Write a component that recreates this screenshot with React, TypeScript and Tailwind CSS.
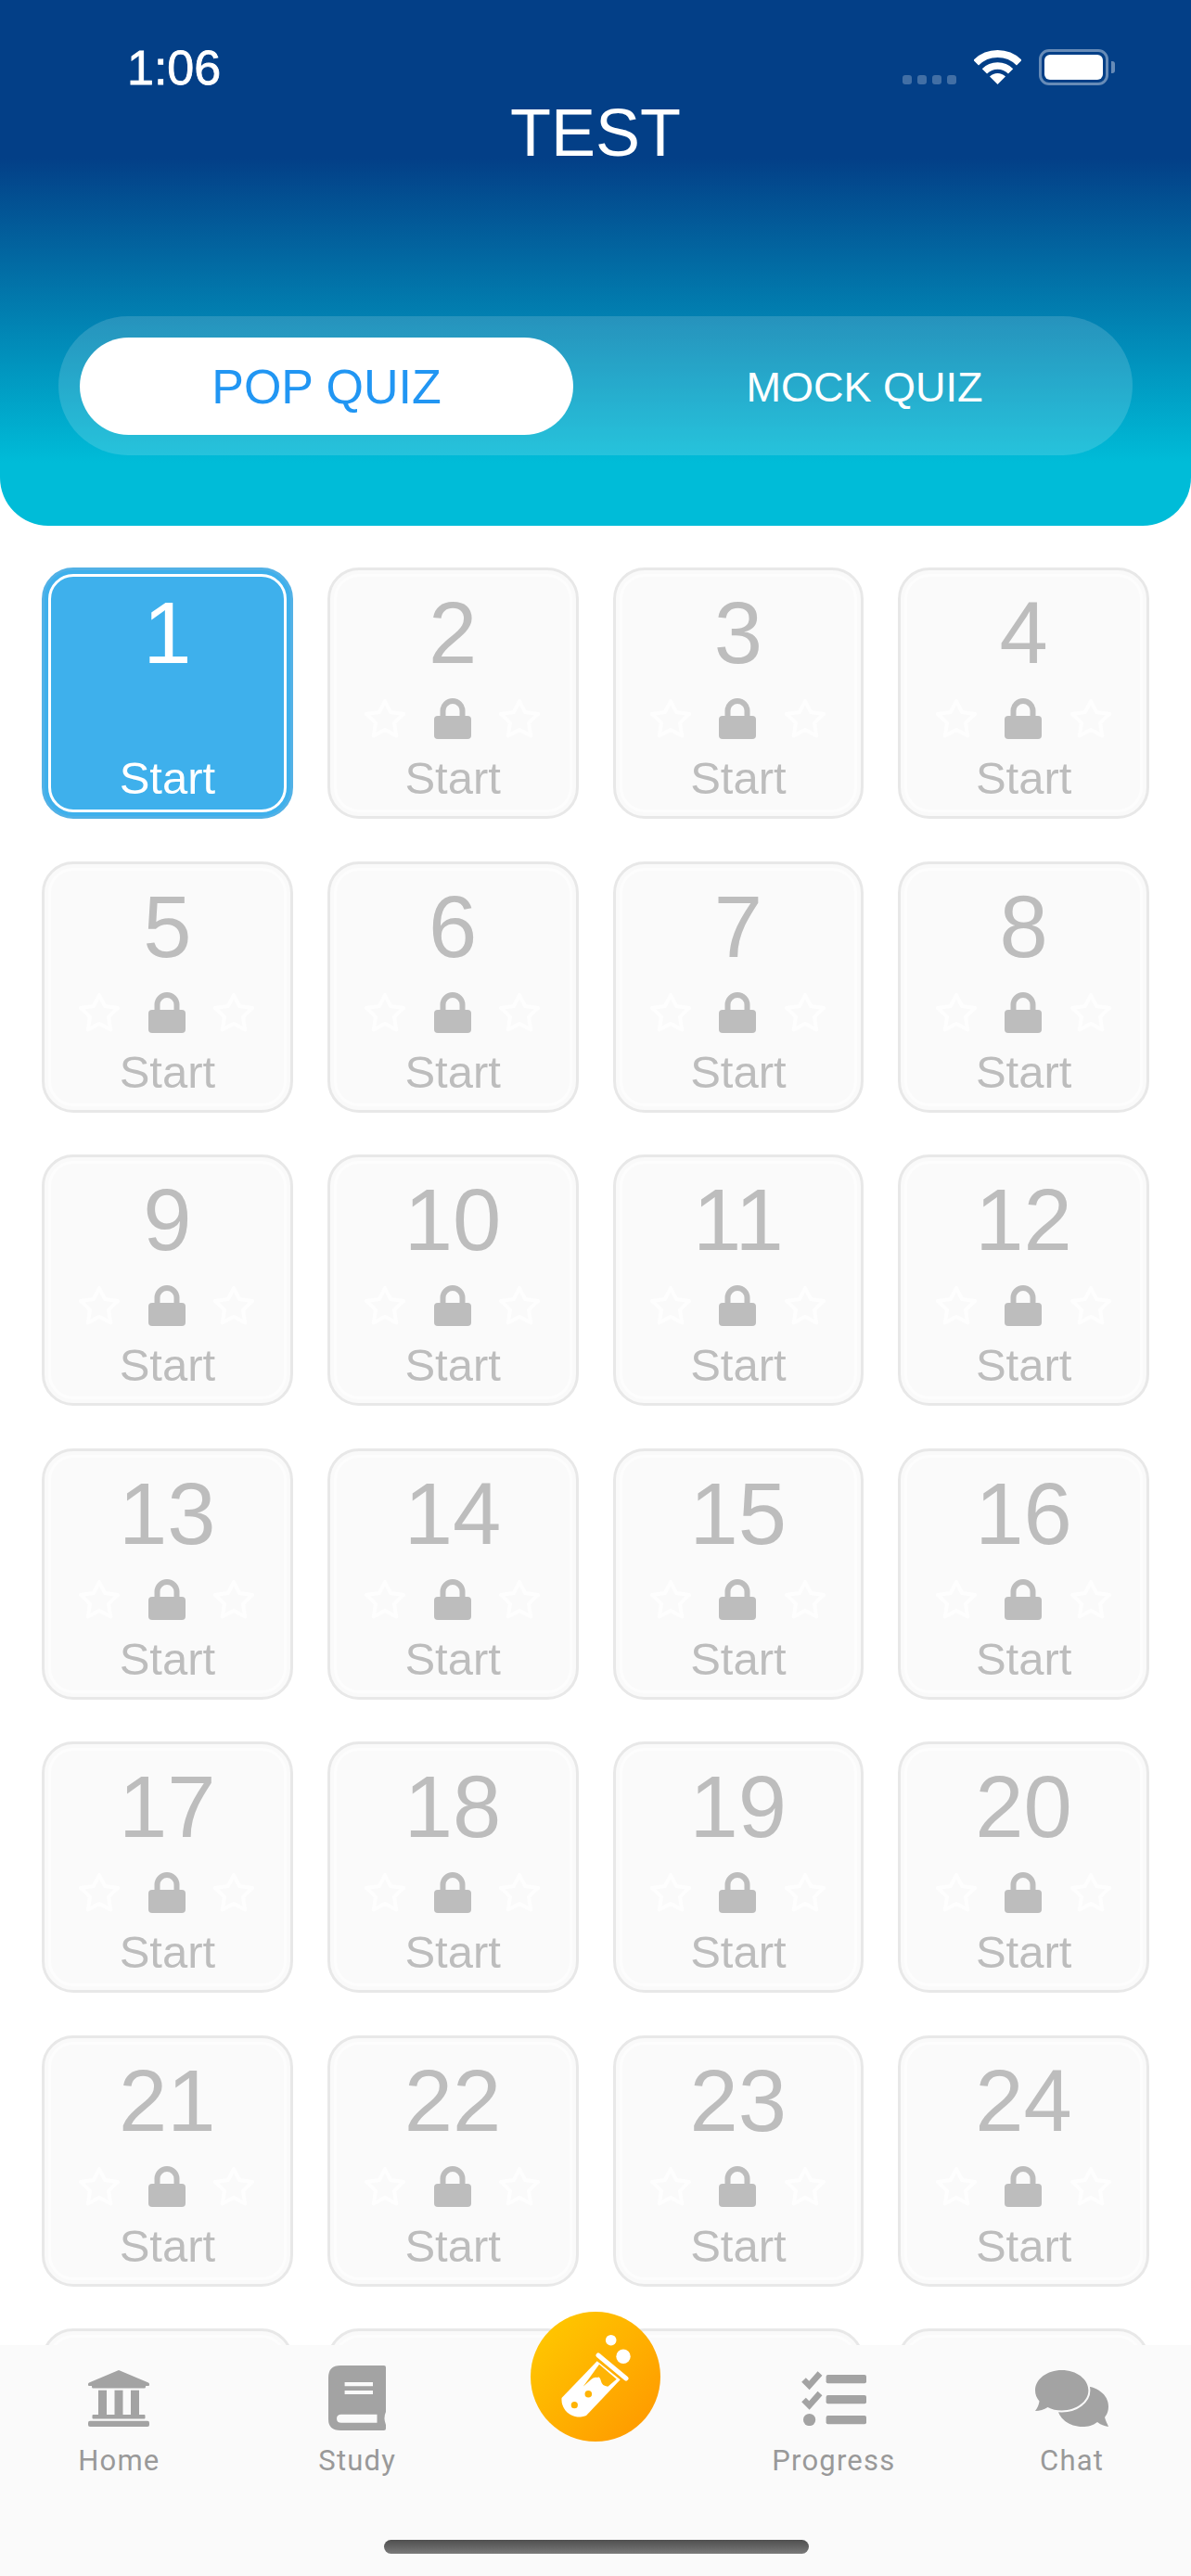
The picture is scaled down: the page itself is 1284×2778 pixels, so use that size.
import React from "react"

const levels = Array.from({ length: 24 }, (_, i) => i + 1)

function Star() {
  return (
    <svg width="46" height="44" viewBox="0 0 46 44">
      <polygon
        points="23,3 29.2,15 43,17 33,26.6 35.3,40.5 23,34 10.7,40.5 13,26.6 3,17 16.8,15"
        fill="none"
        stroke="#fefefe"
        strokeWidth="4"
        strokeLinejoin="round"
      />
    </svg>
  )
}

function Lock() {
  return (
    <svg width="40" height="44" viewBox="0 0 40 44">
      <path d="M9.5 20 V13.5 a10.5 10.5 0 0 1 21 0 V20" fill="none" stroke="#bdbdbd" strokeWidth="6" />
      <rect x="0" y="19" width="40" height="25" rx="4" fill="#bdbdbd" />
    </svg>
  )
}

function LevelCard({ n }: { n?: number }) {
  const active = n === 1
  return (
    <div className={`h-[271px] rounded-[34px] border-[3px] p-[4px] ${active ? "border-[#52b1e6] bg-[#3eb0ec]" : "border-[#e8e8e8] bg-[#fafafa]"}`}>
      <div className={`flex h-full flex-col items-center rounded-[27px] border-[3px] ${active ? "border-white text-white" : "border-[#fdfdfd] text-[#bdbdbd]"}`}>
        {n && (
          <>
            <div className="mt-[13px] text-[94px] leading-[96px]">{n}</div>
            <div className="mt-[22px] flex h-[44px] w-[192px] items-center justify-between pr-[1px]">
              {!active && (
                <>
                  <Star />
                  <Lock />
                  <Star />
                </>
              )}
            </div>
            <div className="mt-[18px] text-[49px] leading-[48px]">Start</div>
          </>
        )}
      </div>
    </div>
  )
}

function StatusBar() {
  return (
    <div className="flex items-start justify-between pl-[137px] pr-[82px] pt-[53px]">
      <div className="text-[52px] leading-[40px] text-white [-webkit-text-stroke:0.8px_white]">1:06</div>
      <div className="flex items-end">
        <div className="mb-[1px] flex gap-[6px]">
          <div className="h-[10px] w-[10px] rounded-[3px] bg-white/25" />
          <div className="h-[10px] w-[10px] rounded-[3px] bg-white/25" />
          <div className="h-[10px] w-[10px] rounded-[3px] bg-white/25" />
          <div className="h-[10px] w-[10px] rounded-[3px] bg-white/25" />
        </div>
        <svg className="ml-[19px] mb-[1px]" width="51" height="37" viewBox="0 0 51 37" fill="none">
          <path d="M2.2 13.7 A33 33 0 0 1 48.8 13.7" stroke="white" strokeWidth="8" />
          <path d="M11.4 22.9 A20 20 0 0 1 39.6 22.9" stroke="white" strokeWidth="7.5" />
          <path d="M25.5 37 L17 28.5 A12 12 0 0 1 34 28.5 Z" fill="white" />
        </svg>
        <div className="ml-[19px] flex items-center">
          <div className="h-[39px] w-[75px] rounded-[11px] border-[3px] border-white/40 p-[3px]">
            <div className="h-full w-full rounded-[6px] bg-white" />
          </div>
          <div className="ml-[3px] h-[13px] w-[4px] rounded-r-[3px] bg-white/40" />
        </div>
      </div>
    </div>
  )
}

function HomeIcon() {
  return (
    <svg width="66" height="61" viewBox="0 0 66 61" fill="#a3a3a3">
      <path d="M33 0 L65 13.5 Q66 14 66 15 V16 Q66 17 65 17 H62 V18 Q62 19.5 60.5 19.5 H5.5 Q4 19.5 4 18 V17 H1 Q0 17 0 16 V15 Q0 14 1 13.5 Z" />
      <rect x="11" y="21.7" width="9" height="26.5" />
      <rect x="28.5" y="21.7" width="9" height="26.5" />
      <rect x="46" y="21.7" width="9" height="26.5" />
      <rect x="4.5" y="48" width="57" height="4.5" rx="1" />
      <rect x="0" y="54.7" width="66" height="6.3" rx="2" />
    </svg>
  )
}

function BookIcon() {
  return (
    <svg width="62" height="70" viewBox="0 0 62 70" fill="#a3a3a3">
      <path
        fillRule="evenodd"
        d="M13 0 H60 Q62 0 62 2 V50 Q59 56 62 64 V68 Q62 70 60 70 H13 Q0 70 0 58 V13 Q0 0 13 0 Z M17.6 18 V22.3 H48 V18 Z M17.6 27 V31 H48 V27 Z M14 52.7 Q9 52.7 9 57.2 Q9 61.7 14 61.7 H52.5 V52.7 Z"
      />
    </svg>
  )
}

function ProgressIcon() {
  return (
    <svg width="70" height="59" viewBox="0 0 70 59" fill="#a3a3a3">
      <path d="M2.5 9.5 L8.5 15.5 L20 2.5" fill="none" stroke="#a3a3a3" strokeWidth="6.5" />
      <path d="M2.5 31 L8.5 37 L20 24" fill="none" stroke="#a3a3a3" strokeWidth="6.5" />
      <circle cx="8.6" cy="52.5" r="6.6" />
      <rect x="26.6" y="4" width="43.4" height="9.3" rx="2" />
      <rect x="26.6" y="26" width="43.4" height="9.3" rx="2" />
      <rect x="26.6" y="48" width="43.4" height="9.3" rx="2" />
    </svg>
  )
}

function ChatIcon() {
  return (
    <svg width="79" height="61" viewBox="0 0 79 61" fill="#a3a3a3">
      <path d="M51 17 C66 17 79 26 79 39 C79 45 77 48 75 51 C76 55 78 58 79 61 C74 60 71 59 67 56 C62 60 57 61 51 61 C37 61 24 52 24 39 C24 26 37 17 51 17 Z" />
      <path
        d="M28.7 0 C44.5 0 57.4 9.7 57.4 21.7 C57.4 33.7 44.5 43.4 28.7 43.4 C23 43.4 18 42.5 13.5 40 C9.5 42.5 5 44 0 44 C2.5 41 4 37 4.5 33.5 C1.5 30 0 26 0 21.7 C0 9.7 12.9 0 28.7 0 Z"
        stroke="#fafafa"
        strokeWidth="4"
        paintOrder="stroke"
      />
    </svg>
  )
}

function FlaskIcon() {
  return (
    <svg className="h-full w-full" viewBox="0 0 140 140">
      <path d="M71.7 53.3 L33.5 93 A19 19 0 0 0 60 112 L96.7 73.3 Z" fill="white" />
      <path d="M74 56.7 L92.7 72.7 L83.3 80.7 Q77 80 76 75 Q74.5 69 72 71 Q68 70 65 73.3 L56.7 80.7 Z" fill="#ffb405" />
      <path d="M73 47 L103 72" stroke="white" strokeWidth="5" strokeLinecap="round" />
      <circle cx="47.3" cy="100.7" r="3.6" fill="#ffb405" />
      <circle cx="62.3" cy="88.7" r="3.8" fill="#ffb405" />
      <circle cx="86.7" cy="30.7" r="5.8" fill="white" />
      <circle cx="100" cy="48.3" r="7.7" fill="white" />
    </svg>
  )
}

const tabs = [
  { label: "Home", icon: <HomeIcon /> },
  { label: "Study", icon: <BookIcon /> },
  { label: "", icon: null },
  { label: "Progress", icon: <ProgressIcon /> },
  { label: "Chat", icon: <ChatIcon /> },
]

export default function App() {
  return (
    <div className="flex h-[2778px] w-[1284px] flex-col overflow-hidden bg-white font-['Liberation_Sans',Arial,sans-serif]">
      <header className="h-[567px] shrink-0 rounded-b-[52px] bg-[linear-gradient(180deg,#033f87_0%,#033f87_30%,#00bcd8_88%,#00bcd8_100%)]">
        <StatusBar />
        <h1 className="mt-[14px] text-center text-[72px] font-normal leading-[72px] text-white">TEST</h1>
        <div className="mx-[63px] mt-[162px] flex h-[150px] items-center rounded-full bg-white/15 pl-[23px]">
          <div className="flex h-[105px] w-[532px] items-center justify-center rounded-full bg-white pt-[2px] text-[52px] text-[#2196f3]">POP QUIZ</div>
          <div className="flex-1 pl-[25px] pt-[4px] text-center text-[45px] text-white">MOCK QUIZ</div>
        </div>
      </header>

      <main className="min-h-0 flex-1 overflow-hidden px-[45px] pt-[45px]">
        <div className="grid grid-cols-4 gap-x-[37px] gap-y-[45.5px]">
          {levels.map((n) => (
            <LevelCard key={n} n={n} />
          ))}
          <LevelCard />
          <LevelCard />
          <LevelCard />
          <LevelCard />
        </div>
      </main>

      <nav className="relative grid h-[249px] shrink-0 grid-cols-5 bg-[#fafafa] pt-[22px] font-['Roboto',sans-serif]">
        {tabs.map((t, i) => (
          <div key={i} className="flex flex-col items-center">
            <div className="flex h-[70px] items-center justify-center">{t.icon}</div>
            <div className="mt-[18px] text-[31px] leading-[30px] tracking-[1.2px] text-[#999999]">{t.label}</div>
          </div>
        ))}
        <div className="absolute left-1/2 top-[-36px] h-[140px] w-[140px] -translate-x-1/2 rounded-full bg-gradient-to-br from-[#ffcc00] to-[#ff9500]">
          <FlaskIcon />
        </div>
        <div className="absolute bottom-[24px] left-[414px] h-[15px] w-[458px] rounded-full bg-gradient-to-b from-[#4f4f4f] to-[#7a7a7a]" />
      </nav>
    </div>
  )
}
